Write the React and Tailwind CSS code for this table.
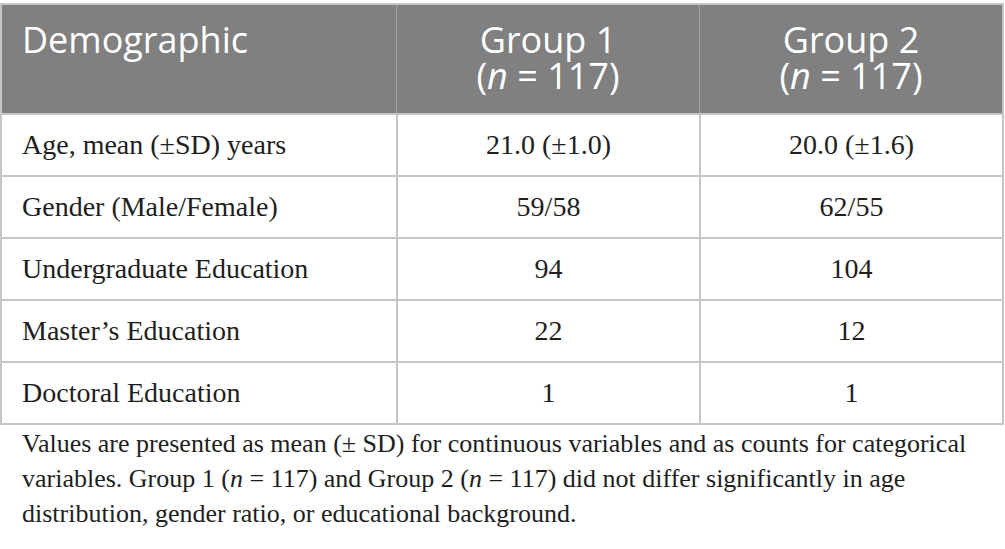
import React from "react";

const serif = { fontFamily: '"Liberation Serif", "Times New Roman", serif' };

const rows = [
  ["Age, mean (±SD) years", "21.0 (±1.0)", "20.0 (±1.6)"],
  ["Gender (Male/Female)", "59/58", "62/55"],
  ["Undergraduate Education", "94", "104"],
  ["Master’s Education", "22", "12"],
  ["Doctoral Education", "1", "1"],
];

export default function App() {
  return (
    <div className="w-[1005px] h-[549px] overflow-hidden bg-white pt-[3px]">
      <div className="w-[1004px] border-2 border-[#c6c6c6]">
        <div
          className="grid grid-cols-[394px_303px_1fr] h-[108px] bg-[#808080] text-white text-[36px] leading-[36px] font-normal"
          style={{ fontFamily: '"Open Sans", "Noto Sans", sans-serif' }}
        >
          <div className="pt-[17px] px-[20px] text-left">Demographic</div>
          <div className="pt-[17px] border-l border-[#a3a3a3] text-center">
            <div>Group 1</div>
            <div>
              (<span className="italic">n</span> = 117)
            </div>
          </div>
          <div className="pt-[17px] border-l border-[#a3a3a3] text-center">
            <div>Group 2</div>
            <div>
              (<span className="italic">n</span> = 117)
            </div>
          </div>
        </div>
        {rows.map((r, i) => (
          <div
            key={i}
            className="grid grid-cols-[394px_303px_1fr] h-[62px] border-t-2 border-[#c6c6c6] text-[28px] text-[#1e1e1e]"
            style={serif}
          >
            <div className="flex items-center px-[20px]">{r[0]}</div>
            <div className="flex items-center justify-center border-l-2 border-[#c6c6c6]">
              {r[1]}
            </div>
            <div className="flex items-center justify-center border-l-2 border-[#c6c6c6]">
              {r[2]}
            </div>
          </div>
        ))}
      </div>
      <p
        className="pl-[22px] mt-[1px] text-[26px] leading-[35px] text-[#1e1e1e]"
        style={serif}
      >
        Values are presented as mean (± SD) for continuous variables and as
        counts for categorical variables. Group 1 (<span className="italic">n</span> = 117)
        and Group 2 (<span className="italic">n</span> = 117) did not differ
        significantly in age distribution, gender ratio, or educational
        background.
      </p>
    </div>
  );
}
